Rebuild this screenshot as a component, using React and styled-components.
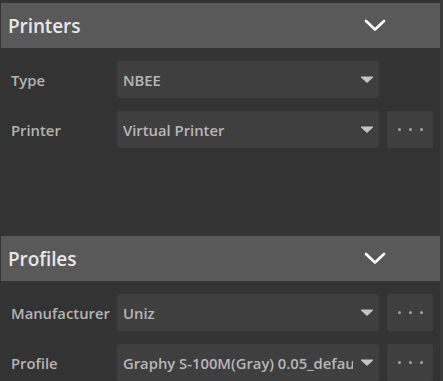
import React from "react";
import styled, { createGlobalStyle } from "styled-components";

const Global = createGlobalStyle`
  html, body {
    margin: 0;
    padding: 0;
    background: #333333;
  }
  body {
    font-family: "Open Sans", "Liberation Sans", sans-serif;
  }
`;

const Panel = styled.div`
  width: 440px;
  height: 381px;
  overflow: hidden;
  background: #333333;
  border-right: 3px solid #3b3b3b;
  padding-top: 3px;
  box-sizing: content-box;
`;

const Section = styled.section`
  display: flex;
  flex-direction: column;
  height: ${(p) => p.height}px;
`;

const Header = styled.div`
  display: flex;
  align-items: center;
  justify-content: space-between;
  height: 45px;
  margin-left: 1px;
  width: 439px;
  padding: 0 54px 0 7px;
  box-sizing: border-box;
  background: #595959;
  color: #e8e8e8;
  font-size: 19px;
  font-weight: 600;
  letter-spacing: -0.1px;
`;

const Rows = styled.div`
  display: flex;
  flex-direction: column;
  gap: 13px;
  padding-top: 13px;
`;

const Row = styled.div`
  display: flex;
  align-items: center;
  height: 37px;
`;

const Label = styled.div`
  width: 106px;
  padding-left: 11px;
  color: #b3b3b3;
  font-size: 14.8px;
  font-weight: 600;
  white-space: nowrap;
`;

const Select = styled.div`
  display: flex;
  align-items: center;
  width: 262px;
  height: 37px;
  padding: 0 3px 0 6px;
  box-sizing: border-box;
  background: #3f3f3f;
  border-radius: 3px;
  color: #b7b7b7;
  font-size: 14.8px;
  font-weight: 600;
`;

const Value = styled.span`
  flex: 1;
  overflow: hidden;
  white-space: nowrap;
`;

const Arrow = styled.svg`
  flex: none;
  width: 12px;
  height: 8px;
  margin: 0 3px 0 8px;
`;

const MoreButton = styled.div`
  display: flex;
  align-items: center;
  justify-content: center;
  gap: 8px;
  width: 46px;
  height: 37px;
  margin-left: 8px;
  background: #3f3f3f;
  border-radius: 2px;
`;

const Dot = styled.span`
  width: 3px;
  height: 3px;
  border-radius: 50%;
  background: #a3a3a3;
`;

const Chevron = () => (
  <svg width="22" height="13" viewBox="0 0 22 13">
    <path
      d="M2 2 L11 10.5 L20 2"
      fill="none"
      stroke="#ffffff"
      strokeWidth="2.6"
      strokeLinecap="round"
      strokeLinejoin="round"
    />
  </svg>
);

const Field = ({ label, value, more }) => (
  <Row>
    <Label>{label}</Label>
    <Select>
      <Value>{value}</Value>
      <Arrow viewBox="0 0 12 8">
        <path d="M0 0.5 H12 V1.5 L6 7 L0 1.5 Z" fill="#c4c4c4" />
      </Arrow>
    </Select>
    {more && (
      <MoreButton>
        <Dot />
        <Dot />
        <Dot />
      </MoreButton>
    )}
  </Row>
);

const App = () => {
  return (
    <Panel>
      <Global />
      <Section height={233}>
        <Header>
          <span>Printers</span>
          <Chevron />
        </Header>
        <Rows>
          <Field label="Type" value="NBEE" />
          <Field label="Printer" value="Virtual Printer" more />
        </Rows>
      </Section>
      <Section height={150}>
        <Header>
          <span>Profiles</span>
          <Chevron />
        </Header>
        <Rows>
          <Field label="Manufacturer" value="Uniz" more />
          <Field label="Profile" value="Graphy S-100M(Gray) 0.05_default" more />
        </Rows>
      </Section>
    </Panel>
  );
};

export default App;
